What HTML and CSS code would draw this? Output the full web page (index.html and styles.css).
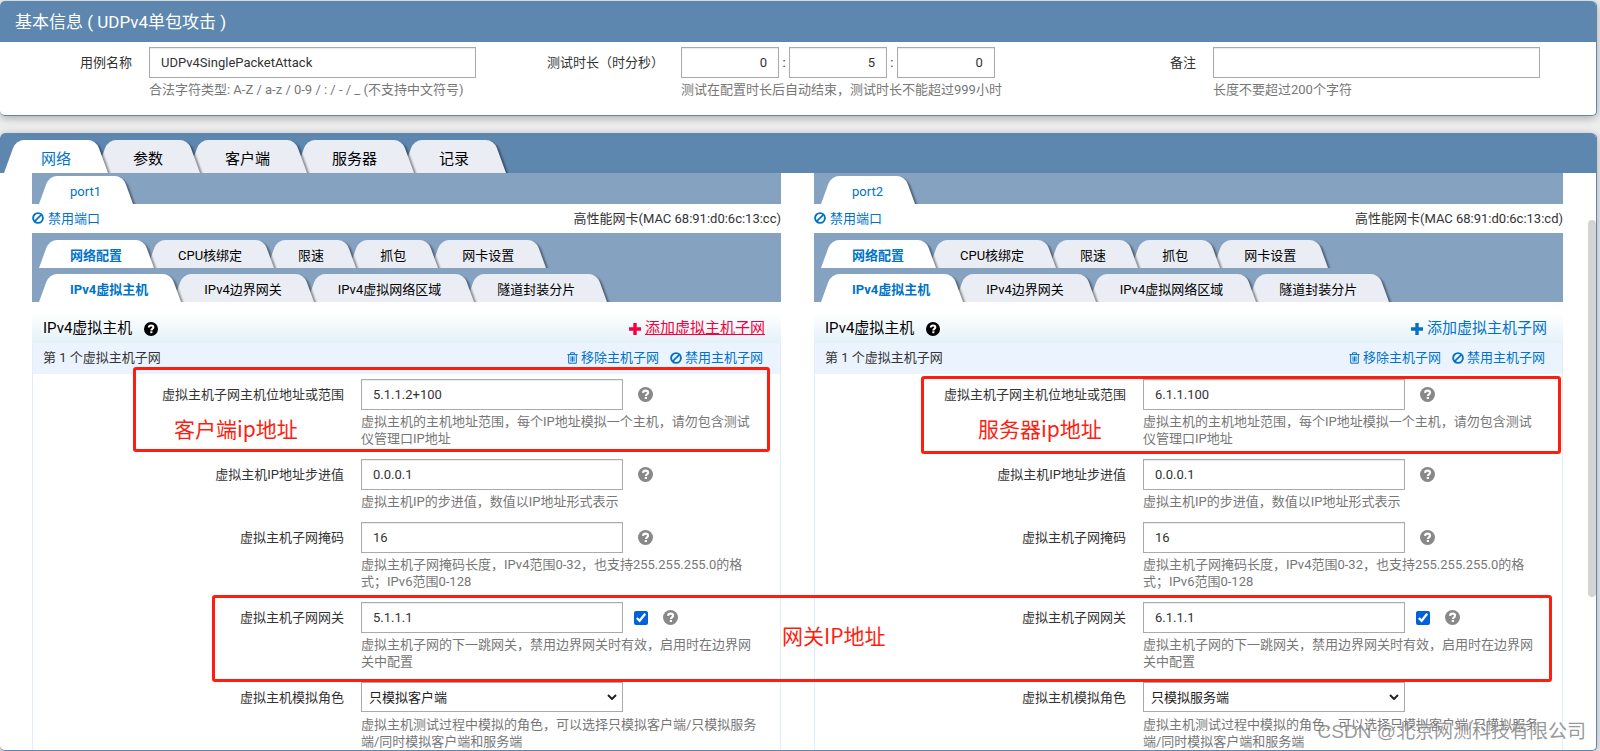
FILE: index.html
```html
<!DOCTYPE html>
<html lang="zh-CN">
<head>
<meta charset="utf-8">
<title>UDPv4单包攻击</title>
<link rel="stylesheet" href="styles.css">
</head>
<body>
<svg class="sprite" aria-hidden="true">
  <symbol id="help" viewBox="0 0 16 16"><circle cx="8" cy="8" r="8" fill="currentColor"/><path d="M5.4 6.3C5.5 4.6 6.6 3.9 8.1 3.9c1.500 0 2.600.8 2.600 2.100 0 1.900-2.300 1.700-2.300 3.600" fill="none" stroke="#fff" stroke-width="2.300"/><rect x="7.200" y="10.600" width="2.400" height="2.200" fill="#fff"/></symbol>
  <symbol id="ban" viewBox="0 0 12 12"><circle cx="6" cy="6" r="4.900" fill="none" stroke="currentColor" stroke-width="1.900"/><path d="M2.600 9.400 9.400 2.600" stroke="currentColor" stroke-width="1.700"/></symbol>
  <symbol id="trash" viewBox="0 0 11 12"><path d="M.4 2.600h10.200M3.600 2.400V.8h3.800v1.600M1.700 2.800v8.400h7.600V2.800M4 4.400v5.200M5.500 4.400v5.200M7 4.400v5.200" fill="none" stroke="currentColor" stroke-width="1"/></symbol>
  <symbol id="plus" viewBox="0 0 12 12"><path d="M4.300 0h3.400v4.300H12v3.400H7.700V12H4.300V7.700H0V4.300h4.300z" fill="currentColor"/></symbol>
</svg>

<section class="panel">
  <h1 class="panel-title">基本信息 ( UDPv4单包攻击 )</h1>
  <div class="basic">
    <div class="field">
      <label class="field-label" for="case">用例名称</label>
      <div class="field-body">
        <input class="text" id="case" type="text" value="UDPv4SinglePacketAttack">
        <p class="hint">合法字符类型: A-Z / a-z / 0-9 / : / - / _ (不支持中文符号)</p>
      </div>
    </div>
    <div class="field">
      <label class="field-label" for="hour">测试时长（时分秒）</label>
      <div class="field-body">
        <div class="duration">
          <input class="text num" id="hour" type="text" value="0"><span>:</span>
          <input class="text num" aria-label="分" type="text" value="5"><span>:</span>
          <input class="text num" aria-label="秒" type="text" value="0">
        </div>
        <p class="hint">测试在配置时长后自动结束，测试时长不能超过999小时</p>
      </div>
    </div>
    <div class="field">
      <label class="field-label" for="note">备注</label>
      <div class="field-body">
        <input class="text" id="note" type="text">
        <p class="hint">长度不要超过200个字符</p>
      </div>
    </div>
  </div>
</section>

<section class="panel main">
  <nav class="tabs top">
    <button class="tab active">网络</button><button class="tab">参数</button><button class="tab">客户端</button><button class="tab">服务器</button><button class="tab">记录</button>
  </nav>
  <div class="ports">
    <div class="port">
      <nav class="tabs"><button class="tab active">port1</button></nav>
      <div class="port-info">
        <a class="link" href="#"><svg class="ic12"><use href="#ban"/></svg>禁用端口</a>
        <span>高性能网卡(MAC 68:91:d0:6c:13:cc)</span>
      </div>
      <nav class="tabs sub">
        <button class="tab active">网络配置</button><button class="tab">CPU核绑定</button><button class="tab">限速</button><button class="tab">抓包</button><button class="tab">网卡设置</button>
      </nav>
      <nav class="tabs sub second">
        <button class="tab active">IPv4虚拟主机</button><button class="tab">IPv4边界网关</button><button class="tab">IPv4虚拟网络区域</button><button class="tab">隧道封装分片</button>
      </nav>
      <header class="group-head">
        <h2>IPv4虚拟主机</h2><svg class="ic14"><use href="#help"/></svg>
        <a class="link add hot" href="#"><svg class="ic12"><use href="#plus"/></svg><span>添加虚拟主机子网</span></a>
      </header>
      <div class="subnet">
        <div class="subnet-head">
          <span>第 1 个虚拟主机子网</span>
          <div class="actions">
            <a class="link" href="#"><svg class="ic11"><use href="#trash"/></svg>移除主机子网</a>
            <a class="link" href="#"><svg class="ic12"><use href="#ban"/></svg>禁用主机子网</a>
          </div>
        </div>
        <div class="rows">
          <div class="row">
            <label class="row-label" for="a1">虚拟主机子网主机位地址或范围</label>
            <div><div class="ctl"><input class="text" id="a1" type="text" value="5.1.1.2+100"><svg class="help"><use href="#help"/></svg></div>
            <p class="hint">虚拟主机的主机地址范围，每个IP地址模拟一个主机，请勿包含测试仪管理口IP地址</p></div>
          </div>
          <div class="row">
            <label class="row-label" for="a2">虚拟主机IP地址步进值</label>
            <div><div class="ctl"><input class="text" id="a2" type="text" value="0.0.0.1"><svg class="help"><use href="#help"/></svg></div>
            <p class="hint">虚拟主机IP的步进值，数值以IP地址形式表示</p></div>
          </div>
          <div class="row">
            <label class="row-label" for="a3">虚拟主机子网掩码</label>
            <div><div class="ctl"><input class="text" id="a3" type="text" value="16"><svg class="help"><use href="#help"/></svg></div>
            <p class="hint">虚拟主机子网掩码长度，IPv4范围0-32，也支持255.255.255.0的格式；IPv6范围0-128</p></div>
          </div>
          <div class="row">
            <label class="row-label" for="a4">虚拟主机子网网关</label>
            <div><div class="ctl"><input class="text" id="a4" type="text" value="5.1.1.1"><input class="check" type="checkbox" aria-label="启用网关" checked><svg class="help"><use href="#help"/></svg></div>
            <p class="hint">虚拟主机子网的下一跳网关，禁用边界网关时有效，启用时在边界网关中配置</p></div>
          </div>
          <div class="row">
            <label class="row-label" for="a5">虚拟主机模拟角色</label>
            <div><div class="ctl top-aligned"><div class="select-box"><select id="a5"><option>只模拟客户端</option></select><svg class="chev" viewBox="0 0 10 6"><path d="M1 1l4 4 4-4" fill="none" stroke="#222" stroke-width="2"/></svg></div></div>
            <p class="hint">虚拟主机测试过程中模拟的角色，可以选择只模拟客户端/只模拟服务端/同时模拟客户端和服务端</p></div>
          </div>
        </div>
      </div>
    </div>

    <div class="port">
      <nav class="tabs"><button class="tab active">port2</button></nav>
      <div class="port-info">
        <a class="link" href="#"><svg class="ic12"><use href="#ban"/></svg>禁用端口</a>
        <span>高性能网卡(MAC 68:91:d0:6c:13:cd)</span>
      </div>
      <nav class="tabs sub">
        <button class="tab active">网络配置</button><button class="tab">CPU核绑定</button><button class="tab">限速</button><button class="tab">抓包</button><button class="tab">网卡设置</button>
      </nav>
      <nav class="tabs sub second">
        <button class="tab active">IPv4虚拟主机</button><button class="tab">IPv4边界网关</button><button class="tab">IPv4虚拟网络区域</button><button class="tab">隧道封装分片</button>
      </nav>
      <header class="group-head">
        <h2>IPv4虚拟主机</h2><svg class="ic14"><use href="#help"/></svg>
        <a class="link add" href="#"><svg class="ic12"><use href="#plus"/></svg><span>添加虚拟主机子网</span></a>
      </header>
      <div class="subnet">
        <div class="subnet-head">
          <span>第 1 个虚拟主机子网</span>
          <div class="actions">
            <a class="link" href="#"><svg class="ic11"><use href="#trash"/></svg>移除主机子网</a>
            <a class="link" href="#"><svg class="ic12"><use href="#ban"/></svg>禁用主机子网</a>
          </div>
        </div>
        <div class="rows">
          <div class="row">
            <label class="row-label" for="b1">虚拟主机子网主机位地址或范围</label>
            <div><div class="ctl"><input class="text" id="b1" type="text" value="6.1.1.100"><svg class="help"><use href="#help"/></svg></div>
            <p class="hint">虚拟主机的主机地址范围，每个IP地址模拟一个主机，请勿包含测试仪管理口IP地址</p></div>
          </div>
          <div class="row">
            <label class="row-label" for="b2">虚拟主机IP地址步进值</label>
            <div><div class="ctl"><input class="text" id="b2" type="text" value="0.0.0.1"><svg class="help"><use href="#help"/></svg></div>
            <p class="hint">虚拟主机IP的步进值，数值以IP地址形式表示</p></div>
          </div>
          <div class="row">
            <label class="row-label" for="b3">虚拟主机子网掩码</label>
            <div><div class="ctl"><input class="text" id="b3" type="text" value="16"><svg class="help"><use href="#help"/></svg></div>
            <p class="hint">虚拟主机子网掩码长度，IPv4范围0-32，也支持255.255.255.0的格式；IPv6范围0-128</p></div>
          </div>
          <div class="row">
            <label class="row-label" for="b4">虚拟主机子网网关</label>
            <div><div class="ctl"><input class="text" id="b4" type="text" value="6.1.1.1"><input class="check" type="checkbox" aria-label="启用网关" checked><svg class="help"><use href="#help"/></svg></div>
            <p class="hint">虚拟主机子网的下一跳网关，禁用边界网关时有效，启用时在边界网关中配置</p></div>
          </div>
          <div class="row">
            <label class="row-label" for="b5">虚拟主机模拟角色</label>
            <div><div class="ctl top-aligned"><div class="select-box"><select id="b5"><option>只模拟服务端</option></select><svg class="chev" viewBox="0 0 10 6"><path d="M1 1l4 4 4-4" fill="none" stroke="#222" stroke-width="2"/></svg></div></div>
            <p class="hint">虚拟主机测试过程中模拟的角色，可以选择只模拟客户端/只模拟服务端/同时模拟客户端和服务端</p></div>
          </div>
        </div>
      </div>
    </div>
  </div>
  <div class="scroll-thumb"></div>
</section>

<div class="mark mark-client"></div>
<div class="mark mark-server"></div>
<div class="mark mark-gateway"></div>
<span class="note note-client">客户端ip地址</span>
<span class="note note-server">服务器ip地址</span>
<span class="note note-gateway">网关IP地址</span>
<span class="watermark">CSDN @北京网测科技有限公司</span>
</body>
</html>
```

FILE: styles.css
```css
* { box-sizing: border-box; }

body {
  position: relative;
  display: flex;
  flex-direction: column;
  gap: 17px;
  height: 100vh;
  margin: 0;
  padding: 1px 3px 0 0;
  overflow: hidden;
  background: #efefef;
  color: #333;
  font: 13px/17px Roboto, "Noto Sans CJK SC", sans-serif;
}

h1, h2, p { margin: 0; font-weight: 400; }
.sprite { display: none; }
input, select, button { font: inherit; color: inherit; }

.panel {
  position: relative;
  flex: none;
  background: #fff;
  border: 0 solid #5d87af;
  border-width: 0 1px 1px 0;
  border-radius: 5px;
  box-shadow: 0 2px 10px rgba(0, 0, 0, .3);
}
.main { flex: 1; min-height: 0; overflow: hidden; }

.panel-title {
  padding: 1px 15px 0;
  background: #5d87af;
  border-radius: 5px 5px 0 0;
  color: #fff;
  font-size: 17px;
  line-height: 40px;
}

.basic {
  display: grid;
  grid-template-columns: repeat(3, 1fr);
  padding: 5px 0 17px;
}
.field { display: grid; grid-template-columns: 25fr 75fr; }
.field-label { padding: 7px 1px 7px 0; text-align: right; white-space: nowrap; }
.field-body { padding: 0 56px 0 16px; }

.text {
  display: block;
  width: 100%;
  height: 31px;
  padding: 0 11px;
  border: 1px solid #aaa;
  border-radius: 0;
  background: #fff;
  box-shadow: inset 0 1px 1px rgba(0, 0, 0, .08);
}
.duration {
  display: grid;
  grid-template-columns: 1fr 10px 1fr 10px 1fr;
  align-items: center;
  width: 96%;
  text-align: center;
}
.num { text-align: right; }
.hint { padding: 3px 0 0; color: #777; }

/* Trapezoid tabs: two skewed halves behind the label */
.tabs {
  display: flex;
  align-items: flex-end;
  height: 31px;
  padding-left: 10px;
  overflow: hidden;
  background: #86a2c1;
  isolation: isolate;
}
.tab {
  position: relative;
  height: 28px;
  padding: 3px 28px 0;
  border: 0;
  background: none;
  color: #000;
  line-height: 20px;
  white-space: nowrap;
}
.tab::before, .tab::after {
  content: "";
  position: absolute;
  z-index: -1;
  top: 0;
  bottom: 0;
  background: #eaeef4;
}
.tab::before {
  left: -3px;
  right: 50%;
  border-radius: 8px 0 0 0;
  transform: skewX(-20deg);
  transform-origin: 0 100%;
}
.tab::after {
  left: 40%;
  right: -4px;
  border-radius: 0 8px 0 0;
  transform: skewX(20deg);
  transform-origin: 100% 100%;
  box-shadow: 2px 2px 2px rgba(0, 0, 0, .4);
}
.tab:nth-child(1) { z-index: 5; }
.tab:nth-child(2) { z-index: 4; }
.tab:nth-child(3) { z-index: 3; }
.tab:nth-child(4) { z-index: 2; }
.tab:nth-child(5) { z-index: 1; }
.tab.active { color: #0073c6; }
.tab.active::before, .tab.active::after { background: #fff; }
.sub { height: 35px; }
.sub .active { font-weight: 700; }
.second { height: 34px; }

.top { height: 40px; background: #5d87af; border-radius: 5px 5px 0 0; font-size: 15px; }
.top .tab { height: 33px; padding: 4px 31px 0; }
.top .tab::before { left: -6px; }
.top .tab::after { right: -6px; }

.ports {
  display: grid;
  grid-template-columns: 1fr 1fr;
  gap: 33px;
  padding: 0 33px 0 32px;
}
.port-info { display: flex; justify-content: space-between; align-items: center; height: 29px; padding-bottom: 1px; }

.link { display: inline-flex; align-items: center; gap: 4px; color: #0073c6; text-decoration: none; }
.ic12 { width: 12px; height: 12px; }
.ic11 { width: 11px; height: 12px; }
.ic14 { width: 14px; height: 14px; color: #000; }

.group-head {
  display: flex;
  align-items: center;
  gap: 12px;
  height: 30px;
  margin-top: 11px;
  padding: 1px 16px 0 11px;
  background: linear-gradient(#fff, #e3f1f8);
  color: #000;
  font-size: 15px;
}
.group-head h2 { font-size: 15px; }
.add { margin-left: auto; }
.hot { color: #f5003d; }
.hot span { text-decoration: underline; }

.subnet { border: 0 solid #dfeef8; border-width: 0 1px; }
.subnet-head {
  display: flex;
  align-items: center;
  justify-content: space-between;
  height: 31px;
  padding: 0 17px 2px 10px;
  background: #ebf4fe;
}
.actions { display: flex; gap: 11px; }
.actions .link { gap: 3px; }

.rows { padding-top: 5px; }
.row {
  display: grid;
  grid-template-columns: 312fr 435fr;
  padding-bottom: 12px;
}
.row-label { padding: 7px 1px 7px 0; text-align: right; }
.row > div { padding: 0 19px 0 16px; }
.ctl { display: flex; align-items: center; height: 31px; }
.top-aligned { align-items: flex-start; }
.ctl .text { width: 262px; }
.help { width: 15px; height: 15px; margin-left: 15px; color: #888; }
.check { width: 14px; height: 14px; margin: 0 0 0 11px; accent-color: #0060df; }
.select-box { position: relative; width: 262px; height: 30px; }
select {
  width: 100%;
  height: 100%;
  padding: 0 7px;
  border: 1px solid #aaa;
  border-radius: 0;
  background: #fff;
  color: #222;
  appearance: none;
}
.chev { position: absolute; right: 6px; top: 12px; width: 10px; height: 6px; }

.scroll-thumb {
  position: absolute;
  top: 87px;
  right: 0;
  width: 8px;
  height: 377px;
  border-radius: 4px;
  background: #d4d4d4;
}

/* Annotations drawn over the page */
.mark { position: absolute; z-index: 10; border: 3px solid #fe1e10; border-radius: 3px; pointer-events: none; }
.mark-client { left: 133px; top: 367px; width: 637px; height: 85px; }
.mark-server { left: 921px; top: 376px; width: 640px; height: 78px; }
.mark-gateway { left: 212px; top: 595px; width: 1340px; height: 87px; }
.note {
  position: absolute;
  z-index: 11;
  color: #fe1e10;
  font: 21px/30px "Noto Sans CJK SC", sans-serif;
  white-space: nowrap;
}
.note-client { left: 174px; top: 413px; }
.note-server { left: 978px; top: 413px; }
.note-gateway { left: 782px; top: 620px; }
.watermark {
  position: absolute;
  z-index: 11;
  right: 14px;
  bottom: 4px;
  color: rgba(120, 120, 120, .75);
  font: 19px/30px "Liberation Sans", "Noto Sans CJK SC", sans-serif;
  text-shadow: 1px 1px 0 rgba(255, 255, 255, .7);
  white-space: nowrap;
}
```
